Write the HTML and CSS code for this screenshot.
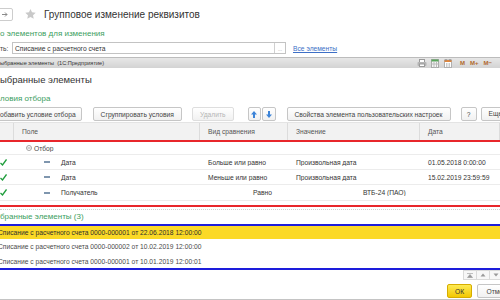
FILE: index.html
```html
<!DOCTYPE html>
<html lang="ru">
<head>
    <meta charset="UTF-8">
    <title>Групповое изменение реквизитов</title>
    <link rel="stylesheet" href="styles.css">
</head>
<body>
    <div class="topbar">
        <span class="nav-btn">
            <svg width="6" height="5" viewBox="0 0 6 5"><path d="M0 2.5h5M3 0.5l2 2-2 2" stroke="#8a8a8a" fill="none"/></svg>
        </span>
        <svg class="star" width="11" height="10" viewBox="0 0 24 23"><path d="M12 0l3.5 7.5 8.5 1-6.2 5.8 1.6 8.2-7.4-4.1-7.4 4.1 1.6-8.2L0 8.5l8.5-1z" fill="#c9c9c9"/></svg>
        <h1 class="title">Групповое изменение реквизитов</h1>
    </div>

    <div class="group-label">о элементов для изменения</div>
    <div class="field-row">
        <span class="field-label">ть:</span>
        <div class="input">
            <span class="input-text">Списание с расчетного счета</span>
            <span class="input-btn">...</span>
        </div>
        <a class="link" href="#">Все элементы</a>
    </div>

    <div class="window">
        <div class="caption">
            <span class="caption-title">ыбранные элементы&nbsp;&nbsp;(1С:Предприятие)</span>
            <span class="caption-tools">
                <!-- print -->
                <svg class="tool-print" width="10" height="8" viewBox="0 0 10 8"><rect x="2.5" y="0.5" width="5" height="3" fill="#fff" stroke="#9a9a9a"/><rect x="0.5" y="3" width="9" height="4" rx="1" fill="#b5b5b5"/><rect x="2.5" y="5" width="5" height="2.5" fill="#fff" stroke="#9a9a9a"/></svg>
                <!-- table -->
                <svg class="tool-table" width="8" height="9" viewBox="0 0 8 9"><rect x="0.5" y="0.5" width="7" height="8" fill="#f4f4f4" stroke="#aaa"/><rect x="0.5" y="0.5" width="7" height="2" fill="#58a65a"/><path d="M3 2.5v6M5.5 2.5v6M0.5 5h7" stroke="#bbb"/></svg>
                <!-- calendar -->
                <svg class="tool-cal" width="8" height="9" viewBox="0 0 8 9"><rect x="0.5" y="1" width="7" height="7.5" fill="#fff" stroke="#b0b0b0"/><rect x="0.5" y="1" width="7" height="2" fill="#e0863e"/><path d="M2 0v2M6 0v2" stroke="#888"/><path d="M2 5h1.5M4.5 5h1.5M2 7h1.5M4.5 7h1.5" stroke="#999"/></svg>
                <span class="mem">M</span>
                <span class="mem">M+</span>
                <span class="mem">M−</span>
            </span>
        </div>

        <h2 class="heading">ыбранные элементы</h2>
        <div class="section-label">ловия отбора</div>

        <div class="toolbar">
            <button class="btn btn-first">обавить условие отбора</button>
            <button class="btn btn-group">Сгруппировать условия</button>
            <button class="btn btn-delete" disabled>Удалить</button>
            <button class="btn btn-arrow btn-up">
                <svg width="6" height="7" viewBox="0 0 6 7"><path d="M3 0L6 3.5H4V7H2V3.5H0z" fill="#3d84d8"/></svg>
            </button>
            <button class="btn btn-arrow btn-down">
                <svg width="6" height="7" viewBox="0 0 6 7"><path d="M3 7L6 3.5H4V0H2V3.5H0z" fill="#3d84d8"/></svg>
            </button>
            <button class="btn btn-props">Свойства элемента пользовательских настроек</button>
            <button class="btn btn-help">?</button>
            <button class="btn btn-more">Еще ▾</button>
        </div>

        <div class="grid">
            <div class="grid-row grid-head">
                <span class="cell"></span>
                <span class="cell">Поле</span>
                <span class="cell">Вид сравнения</span>
                <span class="cell">Значение</span>
                <span class="cell">Дата</span>
            </div>
            <div class="grid-body">
                <div class="grid-row row-group">
                    <span class="cell"></span>
                    <span class="cell tree-group">
                        <svg width="6" height="6" viewBox="0 0 6 6"><circle cx="3" cy="3" r="2.5" fill="none" stroke="#a5a5a5"/><path d="M1.5 3h3" stroke="#a5a5a5"/></svg>
                        Отбор
                    </span>
                    <span class="cell"></span>
                    <span class="cell"></span>
                    <span class="cell"></span>
                </div>
                <div class="grid-row">
                    <span class="cell check"><svg width="7" height="7" viewBox="0 0 7 7"><path d="M0.5 4l2 2 4-5.5" stroke="#1f9d3c" stroke-width="1.3" fill="none"/></svg></span>
                    <span class="cell tree-item"><i class="dash"></i>Дата</span>
                    <span class="cell">Больше или равно</span>
                    <span class="cell">Произвольная дата</span>
                    <span class="cell">01.05.2018 0:00:00</span>
                </div>
                <div class="grid-row">
                    <span class="cell check"><svg width="7" height="7" viewBox="0 0 7 7"><path d="M0.5 4l2 2 4-5.5" stroke="#1f9d3c" stroke-width="1.3" fill="none"/></svg></span>
                    <span class="cell tree-item"><i class="dash"></i>Дата</span>
                    <span class="cell">Меньше или равно</span>
                    <span class="cell">Произвольная дата</span>
                    <span class="cell">15.02.2019 23:59:59</span>
                </div>
                <div class="grid-row row-last">
                    <span class="cell check"><svg width="7" height="7" viewBox="0 0 7 7"><path d="M0.5 4l2 2 4-5.5" stroke="#1f9d3c" stroke-width="1.3" fill="none"/></svg></span>
                    <span class="cell tree-item"><i class="dash"></i>Получатель</span>
                    <span class="cell cell-eq">Равно</span>
                    <span class="cell cell-wide">ВТБ-24 (ПАО)</span>
                </div>
            </div>
            <div class="grid-foot"></div>
        </div>

        <div class="section-label">бранные элементы (3)</div>
        <div class="list">
            <div class="list-row selected"><span>Списание с расчетного счета 0000-000001 от 22.06.2018 12:00:00</span></div>
            <div class="list-row"><span>Списание с расчетного счета 0000-000002 от 10.02.2019 12:00:00</span></div>
            <div class="list-row"><span>Списание с расчетного счета 0000-000001 от 10.01.2019 12:00:01</span></div>
        </div>

        <div class="list-nav">
            <button class="nav-small"><svg width="6" height="5" viewBox="0 0 6 5"><path d="M0 0.5h6M3 1.5l2.5 3h-5z" fill="#999" stroke="#999" stroke-width="0.6"/></svg></button>
            <button class="nav-small"><svg width="6" height="4" viewBox="0 0 6 4"><path d="M3 0.5l2.5 3h-5z" fill="#999"/></svg></button>
            <button class="nav-small"><svg width="6" height="4" viewBox="0 0 6 4"><path d="M3 3.5l2.5-3h-5z" fill="#999"/></svg></button>
        </div>

        <div class="footer">
            <button class="btn btn-ok">ОК</button>
            <button class="btn btn-cancel">Отмена</button>
        </div>
        <div class="statusline"></div>
    </div>
</body>
</html>
```

FILE: styles.css
```css
body {
    margin: 0;
    width: 500px;
    height: 300px;
    overflow: hidden;
    background-color: #fff;
    color: #333;
    font-family: "Liberation Sans", Arial, sans-serif;
    font-size: 6.7px;
}

/* top of the outer form */
.topbar {
    height: 28px;
    display: flex;
    align-items: center;
}

.nav-btn {
    width: 17px;
    height: 13px;
    margin-left: -4px;
    border: 1px solid #cdcdcd;
    border-radius: 2px;
    display: flex;
    align-items: center;
    justify-content: center;
    box-sizing: border-box;
    flex-shrink: 0;
}

.star {
    margin-left: 12px;
    flex-shrink: 0;
}

.title {
    margin: 0 0 0 8px;
    font-size: 10px;
    font-weight: normal;
    color: #333;
}

.group-label,
.section-label {
    height: 12px;
    line-height: 12px;
    font-size: 8px;
    color: #3b9e5e;
    white-space: nowrap;
}

.field-row {
    height: 12px;
    margin-top: 2px;
    display: flex;
    align-items: center;
}

.field-label {
    width: 12px;
    color: #444;
}

.input {
    width: 274px;
    height: 12px;
    border: 1px solid #c3c3c3;
    box-sizing: border-box;
    display: flex;
    align-items: center;
}

.input-text {
    flex-grow: 1;
    padding-left: 2px;
    color: #333;
}

.input-btn {
    width: 10px;
    height: 100%;
    border-left: 1px solid #d0d0d0;
    color: #999;
    font-size: 5px;
    text-align: center;
    line-height: 12px;
}

.link {
    margin-left: 7px;
    color: #3d6fc6;
}

/* inner window */
.window {
    margin-top: 3px;
    border-top: 1px solid #bcbcbc;
}

.caption {
    height: 10px;
    background: linear-gradient(#e7e7e7, #d3d3d3);
    display: flex;
    align-items: center;
    font-size: 5.6px;
    color: #333;
    white-space: nowrap;
}

.caption-title {
    flex-grow: 1;
}

.caption-tools {
    display: flex;
    align-items: center;
    padding-right: 3px;
}

.tool-print { margin-right: 4px; }
.tool-table { margin-right: 5px; }
.tool-cal { margin-right: 8px; }

.mem {
    margin-right: 5px;
    color: #b0682c;
    font-size: 6px;
    font-weight: bold;
}

.heading {
    margin: 0;
    height: 24px;
    line-height: 24px;
    font-size: 9.5px;
    font-weight: normal;
    color: #333;
}

.section-label {
    height: 14px;
    line-height: 14px;
}

.toolbar {
    height: 14px;
    margin-top: 1px;
    display: flex;
}

.btn {
    height: 14px;
    padding: 0 7px;
    border: 1px solid #c6c6c6;
    border-radius: 2px;
    background: linear-gradient(#ffffff, #f1f1f1);
    font-family: inherit;
    font-size: 6.7px;
    color: #444;
    white-space: nowrap;
    flex-shrink: 0;
    display: flex;
    align-items: center;
    justify-content: center;
}

.btn-first {
    margin-left: -6px;
    padding: 0 5px;
}

.btn-group { margin-left: 11px; }
.btn-delete { margin-left: 10px; color: #b5b5b5; border-color: #dedede; }

.btn-arrow {
    width: 13px;
    padding: 0;
}

.btn-up { margin-left: 14px; }
.btn-down { margin-left: 1px; width: 14px; }
.btn-props { margin-left: 11px; }
.btn-help { margin-left: 10px; width: 16px; padding: 0; }
.btn-more { margin-left: 4px; }

/* conditions grid */
.grid {
    margin-top: 1px;
}

.grid-row {
    display: grid;
    grid-template-columns: 14px 186px 88px 132px 1fr;
    align-items: center;
    height: 15px;
    border-bottom: 1px solid #ececec;
    box-sizing: border-box;
    white-space: nowrap;
}

.grid-head {
    height: 18px;
    align-items: stretch;
    background-color: #f2f2f2;
    border-top: 1px solid #e4e4e4;
    border-bottom: none;
    color: #555;
}

.grid-head .cell {
    display: flex;
    align-items: center;
    border-right: 1px solid #dcdcdc;
}

.cell {
    padding-left: 8px;
    overflow: hidden;
}

.grid-head .cell:first-child,
.grid-row .check {
    padding-left: 0;
}

.grid-body {
    border-top: 2px solid #e8262b;
    border-bottom: 2px solid #e8262b;
    padding-bottom: 4px;
}

.row-group {
    height: 13px;
    color: #444;
}

.row-last {
    height: 16px;
}

.tree-group {
    padding-left: 12px;
    display: flex;
    align-items: center;
    gap: 2px;
}

.tree-item {
    padding-left: 30px;
    display: flex;
    align-items: center;
}

.dash {
    width: 6px;
    height: 2px;
    margin-right: 11px;
    background-color: #7f96ae;
}

.check svg {
    display: block;
}

.cell-eq {
    padding-left: 53px;
}

.cell-wide {
    grid-column: span 2;
    padding-left: 75px;
}

.grid-foot {
    margin-top: 2px;
    border-top: 1px dotted #cfcfcf;
}

/* selected items */
.list {
    border-top: 2px solid #1d1ddb;
    border-bottom: 2px solid #1d1ddb;
}

.list-row {
    height: 15px;
    display: flex;
    align-items: center;
    color: #4a4a4a;
    white-space: nowrap;
}

.list-row span {
    margin-left: -2px;
}

.list-row:first-child {
    height: 13px;
}

.list-row:last-child {
    height: 14px;
}

.list-row.selected {
    background-color: #fbd926;
    color: #2e2e2e;
}

.list-nav {
    height: 10px;
    margin-right: -3px;
    display: flex;
    justify-content: flex-end;
}

.nav-small {
    width: 14px;
    height: 10px;
    padding: 0;
    margin-left: -1px;
    border: 1px solid #dadada;
    background-color: #f7f7f7;
    display: flex;
    align-items: center;
    justify-content: center;
}

.footer {
    height: 14px;
    margin-top: 4px;
    margin-right: -20px;
    display: flex;
    justify-content: flex-end;
}

.btn-ok {
    width: 25px;
    padding: 0;
    background: linear-gradient(#fdea55, #f3c800);
    border-color: #d6ad00;
    color: #333;
}

.btn-cancel {
    width: 43px;
    margin-left: 5px;
}

.statusline {
    margin-top: 1px;
    border-top: 1px solid #c4c4c4;
}
```
